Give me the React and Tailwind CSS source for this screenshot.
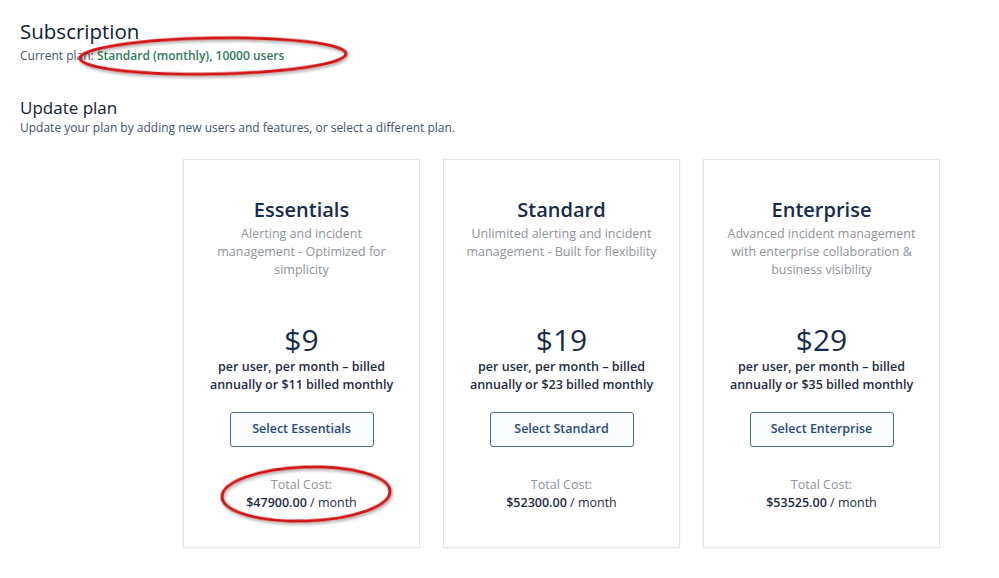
import React from "react"

const plans = [
  {
    name: "Essentials",
    desc: ["Alerting and incident", "management - Optimized for", "simplicity"],
    price: "$9",
    monthly: "$11",
    total: "$47900.00",
  },
  {
    name: "Standard",
    desc: ["Unlimited alerting and incident", "management - Built for flexibility"],
    price: "$19",
    monthly: "$23",
    total: "$52300.00",
  },
  {
    name: "Enterprise",
    desc: ["Advanced incident management", "with enterprise collaboration &", "business visibility"],
    price: "$29",
    monthly: "$35",
    total: "$53525.00",
  },
]

const PlanCard = ({ plan }) => {
  return (
    <div className="w-[237px] h-[389px] border border-[#e3e4e6] shadow-[0_0_2px_rgba(0,0,0,0.06)] bg-white flex flex-col items-center pt-[36px] text-center">
      <h3 className="text-[20px] leading-[28px] font-semibold text-[#172b4d]">{plan.name}</h3>
      {/* descripcion - altura fija para 3 lineas */}
      <div className="h-[54px] mt-[1px] text-[12.5px] leading-[18px] text-[#8e939c]">
        {plan.desc.map((line) => (
          <p key={line}>{line}</p>
        ))}
      </div>
      <p className="mt-[43px] text-[30px] leading-[36px] text-[#172b4d]">{plan.price}</p>
      <p className="text-[12.5px] leading-[18px] font-semibold text-[#1f2b3f]">
        per user, per month – billed
        <br />
        annually or {plan.monthly} billed monthly
      </p>
      <button className="mt-[18px] w-[144px] h-[35px] border border-[#4a6890] rounded-[3px] bg-[#fafbfc] text-[12.5px] text-[#284a7e] font-semibold">
        Select {plan.name}
      </button>
      <p className="mt-[29px] text-[12.5px] leading-[18px] text-[#8e939c]">Total Cost:</p>
      <p className="text-[12.5px] leading-[18px] text-[#1f2b3f]">
        <span className="font-semibold">{plan.total}</span> / month
      </p>
    </div>
  )
}

const App = () => {
  return (
    <div className="relative w-[999px] h-[578px] bg-white overflow-hidden font-['Open_Sans',sans-serif]">
      <div className="pl-[20px] pt-[17px]">
        {/* Subscription section */}
        <h1 className="text-[20.5px] leading-[28px] text-[#101c33]">Subscription</h1>
        <p className="mt-[3px] text-[12px] leading-[16px] text-[#42526e]">
          Current plan: <span className="text-[#2f7a5c] font-semibold">Standard (monthly), 10000 users</span>
        </p>

        {/* Update plan section */}
        <h2 className="mt-[33px] text-[17px] leading-[22px] text-[#101c33]">Update plan</h2>
        <p className="mt-[1px] text-[12px] leading-[16px] text-[#42526e]">
          Update your plan by adding new users and features, or select a different plan.
        </p>

        {/* Plans */}
        <div className="ml-[163px] mt-[23px] flex gap-[23px]">
          {plans.map((plan) => (
            <PlanCard key={plan.name} plan={plan} />
          ))}
        </div>
      </div>

      {/* Red annotation marks */}
      <svg className="absolute inset-0 pointer-events-none" width="999" height="578">
        <defs>
          <filter id="sh" x="-10%" y="-30%" width="120%" height="160%">
            <feDropShadow dx="1" dy="2" stdDeviation="1.5" floodColor="#000" floodOpacity="0.35" />
          </filter>
        </defs>
        <ellipse cx="213" cy="56" rx="133" ry="18" transform="rotate(-1 213 56)" fill="none" stroke="#d01818" strokeWidth="3" filter="url(#sh)" />
        <ellipse cx="306" cy="494" rx="84" ry="27" transform="rotate(-2 306 494)" fill="none" stroke="#d01818" strokeWidth="3" filter="url(#sh)" />
      </svg>
    </div>
  )
}

export default App
